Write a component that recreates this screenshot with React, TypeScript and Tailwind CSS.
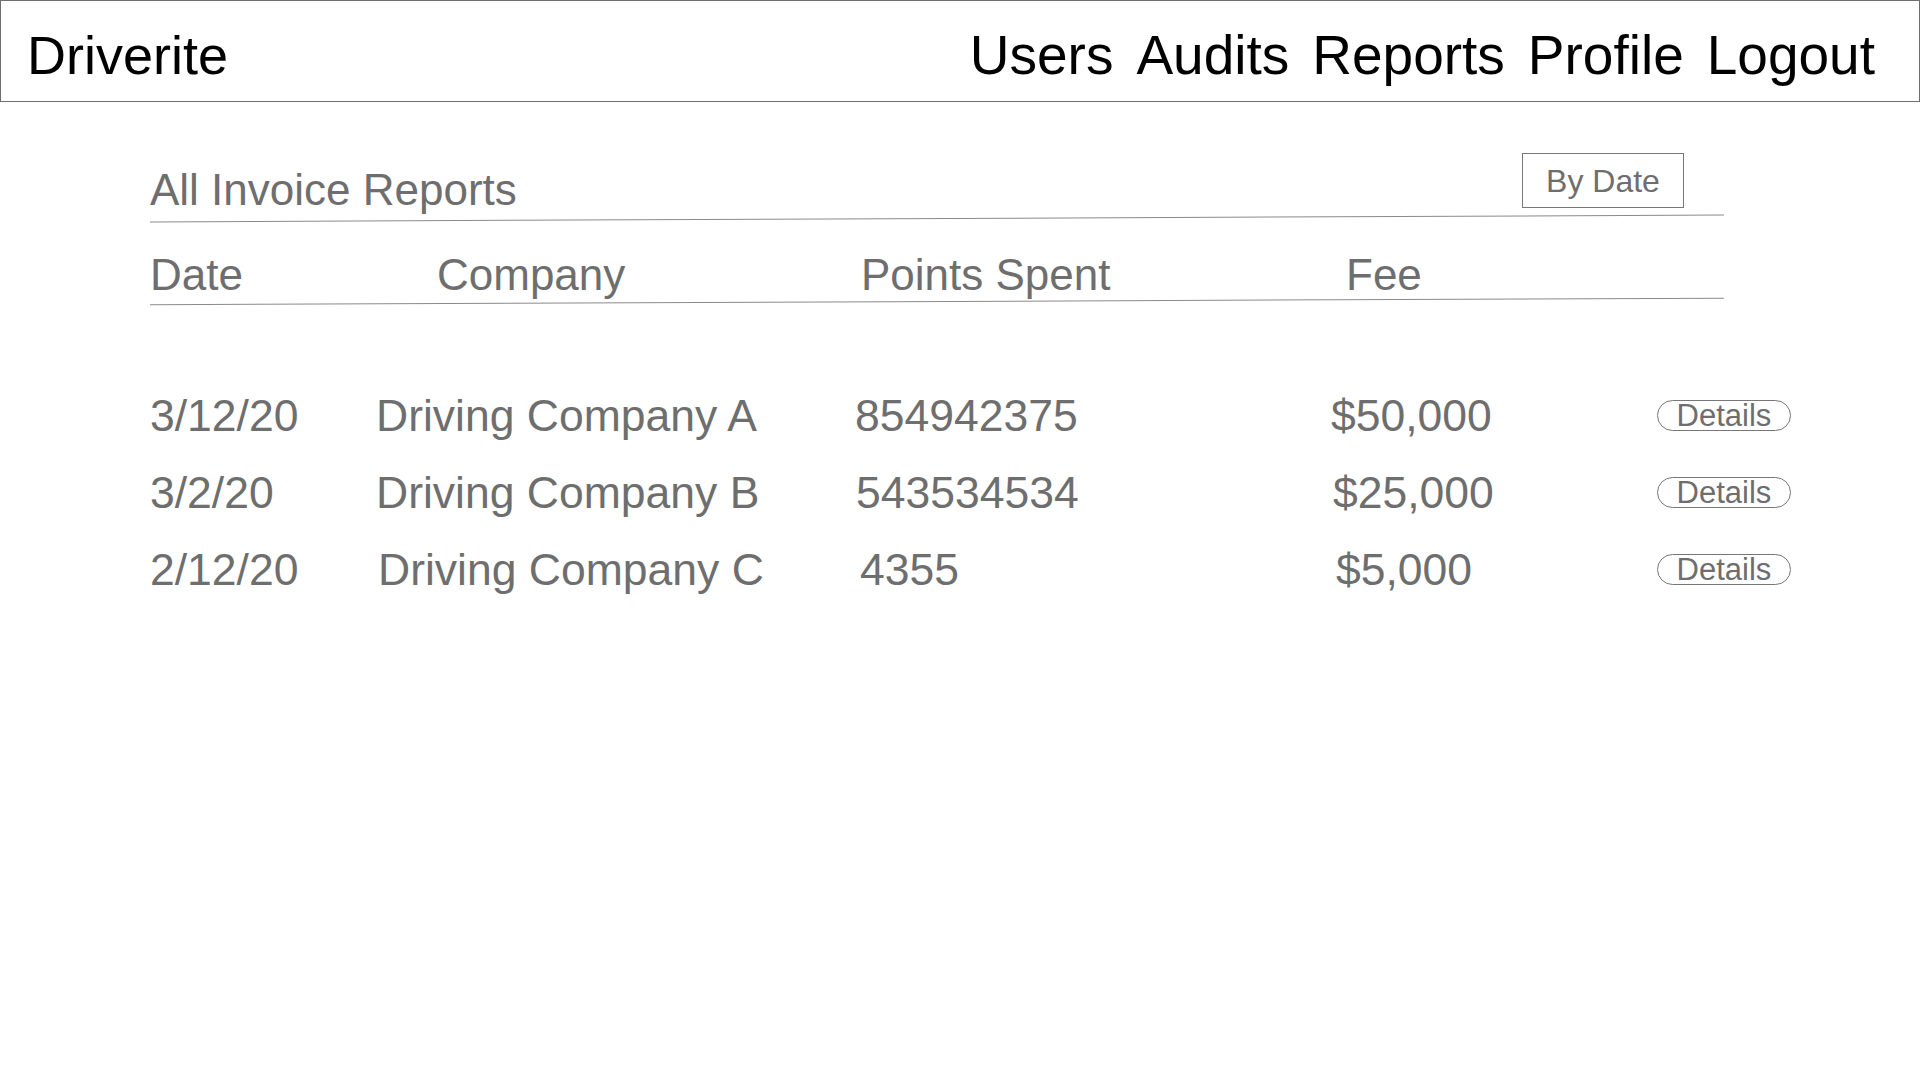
import React from "react";

const rows = [
  { date: "3/12/20", company: "Driving Company A", points: "854942375", fee: "$50,000", cOff: "", pOff: "", fOff: "" },
  { date: "3/2/20", company: "Driving Company B", points: "543534534", fee: "$25,000", cOff: "", pOff: "pl-[1px]", fOff: "pl-[2px]" },
  { date: "2/12/20", company: "Driving Company C", points: "4355", fee: "$5,000", cOff: "pl-[2px]", pOff: "pl-[5px]", fOff: "pl-[5px]" },
];

export default function App() {
  return (
    <div className="w-[1920px] h-[1080px] bg-white overflow-hidden font-['Liberation_Sans',Arial,sans-serif]">
      <header className="h-[102px] border border-[#6e6e6e] flex items-center justify-between pl-[26px] pr-[44px] pt-[8px] text-black">
        <div className="text-[54px] leading-[54px]">Driverite</div>
        <nav className="flex gap-[23px] text-[55px] leading-[54px]">
          <span>Users</span>
          <span>Audits</span>
          <span>Reports</span>
          <span>Profile</span>
          <span>Logout</span>
        </nav>
      </header>

      <main className="ml-[150px] w-[1574px] text-[#6e6e6e]">
        <div className="mt-[51px] flex items-start justify-between">
          <div className="mt-[12px] text-[44px] leading-[50px]">All Invoice Reports</div>
          <div className="mr-[40px] w-[162px] h-[55px] border border-[#777777] flex items-center justify-center text-[32px] leading-none">
            By Date
          </div>
        </div>
        <div className="mt-[3px] h-px bg-[#8a8a8a] -rotate-[0.25deg]" />

        <div className="mt-[31px] grid grid-cols-[287px_424px_485px_1fr] text-[44px] leading-[50px]">
          <div>Date</div>
          <div>Company</div>
          <div>Points Spent</div>
          <div>Fee</div>
        </div>
        <div className="mt-[1px] h-px bg-[#8a8a8a] -rotate-[0.24deg]" />

        <div className="mt-[75px]">
          {rows.map((r) => (
            <div
              key={r.date}
              className="grid grid-cols-[226px_479px_476px_326px_134px] items-center text-[44.5px] leading-[77px]"
            >
              <div>{r.date}</div>
              <div className={r.cOff}>{r.company}</div>
              <div className={r.pOff}>{r.points}</div>
              <div className={r.fOff}>{r.fee}</div>
              <div className="w-[134px] h-[31px] rounded-full border border-[#777777] flex items-center justify-center text-[31px] leading-none">
                Details
              </div>
            </div>
          ))}
        </div>
      </main>
    </div>
  );
}
